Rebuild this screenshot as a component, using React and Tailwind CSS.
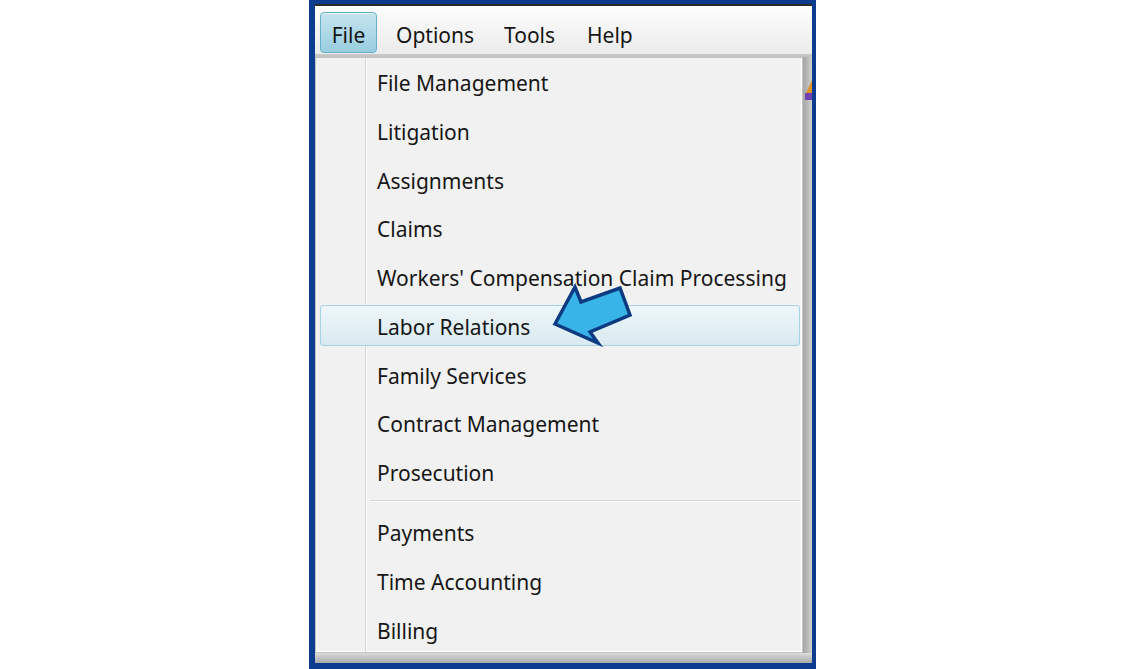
import React from "react";

const groupA = [
  "File Management",
  "Litigation",
  "Assignments",
  "Claims",
  "Workers' Compensation Claim Processing",
  "Labor Relations",
  "Family Services",
  "Contract Management",
  "Prosecution",
];
const groupB = ["Payments", "Time Accounting", "Billing"];

function Row({ label, active }) {
  return (
    <div className="h-[48.75px] pt-[2px] pl-[4px] pr-[2px]">
      {active ? (
        <div className="h-[41px] flex items-center pt-[3px] pl-[56px] rounded-[3px] border border-[#a3d3e4] bg-gradient-to-b from-[#eef6f9] to-[#d9eaf0]">
          <span>{label}</span>
        </div>
      ) : (
        <div className="h-[41px] flex items-center pt-[3px] pl-[56px] border border-transparent">
          <span>{label}</span>
        </div>
      )}
    </div>
  );
}

export default function App() {
  return (
    <div
      className="relative w-[1124px] h-[669px] bg-white flex text-[#161616]"
      style={{ fontFamily: '"Noto Sans", "Open Sans", sans-serif' }}
    >
      <div className="ml-[309px] w-[507px] h-[669px] bg-[#0d3b8e] pl-[6px] pr-[4px] pt-[4px] pb-[6px] flex flex-col">
        <div className="h-[2px] bg-[#2a2a2a]" />
        {/* menu bar */}
        <div className="h-[49px] flex items-start pt-[6px] pl-[5px] bg-gradient-to-b from-[#fdfdfd] to-[#ebebeb] border-b border-[#c9c9c9] text-[21px] leading-none">
          <div className="h-[41px] w-[57px] flex items-center justify-center pt-[5px] rounded-[4px] border border-[#62b1c9] bg-gradient-to-b from-[#c6e4ef] to-[#98cddf] shadow-[inset_0_1px_0_rgba(255,255,255,0.6)]">
            File
          </div>
          <div className="h-[41px] flex items-center pt-[5px] ml-[19px] w-[108px]">Options</div>
          <div className="h-[41px] flex items-center pt-[5px] w-[83px]">Tools</div>
          <div className="h-[41px] flex items-center pt-[5px]">Help</div>
        </div>
        {/* content area */}
        <div className="flex-1 flex flex-col bg-[#c4c4c4] pt-[2px]">
          <div className="flex flex-1">
            <div className="relative w-[488px] h-[596px] overflow-hidden bg-[#f1f1f1] border border-[#c3c3c3] shadow-[inset_-1px_-1px_0_#ffffff] text-[21px] leading-none">
              <div className="absolute left-[49px] top-0 bottom-0 w-[1px] bg-[#d6d6d6]" />
              <div className="absolute left-[50px] top-0 bottom-0 w-[1px] bg-[#fbfbfb]" />
              <div className="relative pt-[1.6px]">
                {groupA.map((l) => (
                  <Row key={l} label={l} active={l === "Labor Relations"} />
                ))}
                <div className="h-[11.25px] pl-[54px] pr-[2px] pt-[1.5px]">
                  <div className="h-[1px] bg-[#d4d4d4]" />
                  <div className="h-[1px] bg-[#fcfcfc]" />
                </div>
                {groupB.map((l) => (
                  <Row key={l} label={l} />
                ))}
              </div>
            </div>
            <div className="flex-1 flex flex-col bg-gradient-to-r from-[#a6a6a6] via-[#b8b8b8] to-[#d2d2d2]">
              <div className="h-[22px]" />
              <svg width="9" height="24" viewBox="0 0 9 24">
                <path d="M9 1 L3 14 L9 14 Z" fill="#e0952a" />
                <path d="M2 14 L9 14 L9 21 L2 21 Z" fill="#7142b4" />
              </svg>
            </div>
          </div>
          <div className="h-[10px] bg-gradient-to-b from-[#dcdcdc] to-[#a9a9a9]" />
        </div>
      </div>
      {/* pointer arrow */}
      <svg
        className="absolute left-0 top-0 pointer-events-none"
        width="1124"
        height="669"
        viewBox="0 0 1124 669"
      >
        <polygon
          points="555,324 575,287 581,302 620,288 630,315 590,332 598,343"
          fill="#38b4e8"
          stroke="#0c3a80"
          strokeWidth="3.5"
          strokeLinejoin="miter"
        />
      </svg>
    </div>
  );
}
